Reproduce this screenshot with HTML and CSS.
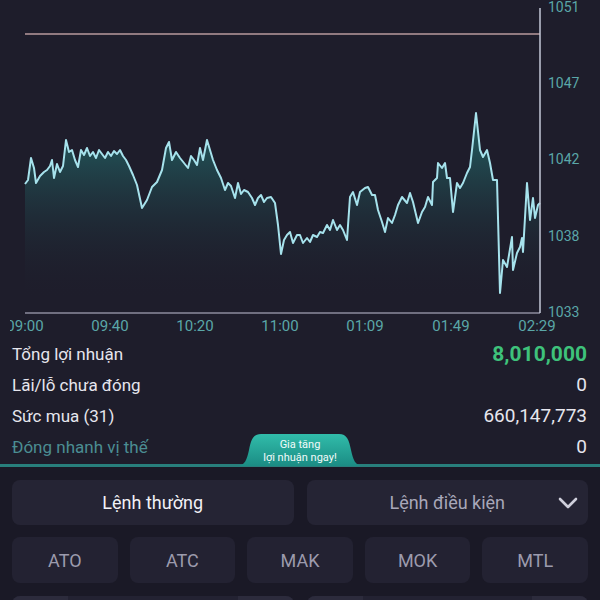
FILE: index.html
```html
<!DOCTYPE html>
<html lang="vi">
<head>
    <meta charset="UTF-8">
    <meta name="viewport" content="width=device-width, initial-scale=1.0">
    <title>Lợi nhuận</title>
    <link rel="stylesheet" href="styles.css">
</head>
<body>
    <div class="app">
        <section class="chart">
            <svg width="600" height="338" viewBox="0 0 600 338">
                <defs>
                    <linearGradient id="areaFill" x1="0" y1="140" x2="0" y2="300" gradientUnits="userSpaceOnUse">
                        <stop offset="0" stop-color="#22565a" stop-opacity="0.95"/>
                        <stop offset="1" stop-color="#1e1d2b" stop-opacity="0"/>
                    </linearGradient>
                    <clipPath id="labelClip">
                        <rect x="10" y="0" width="590" height="338"/>
                    </clipPath>
                </defs>

                <path id="area" class="area" d=""/>
                <polyline id="line" class="line" points=""/>

                <line class="ref-line" x1="25" y1="34" x2="540" y2="34"/>
                <line class="axis" x1="25" y1="313" x2="540" y2="313"/>
                <line class="axis-right" x1="540" y1="8" x2="540" y2="313"/>

                <g class="y-labels">
                    <text x="548" y="8">1051</text>
                    <text x="548" y="84">1047</text>
                    <text x="548" y="160">1042</text>
                    <text x="548" y="237">1038</text>
                    <text x="548" y="313">1033</text>
                </g>
                <g class="x-labels" clip-path="url(#labelClip)">
                    <text x="25" y="327">09:00</text>
                    <text x="110" y="327">09:40</text>
                    <text x="195" y="327">10:20</text>
                    <text x="280" y="327">11:00</text>
                    <text x="365" y="327">01:09</text>
                    <text x="451" y="327">01:49</text>
                    <text x="537" y="327">02:29</text>
                </g>
            </svg>
        </section>

        <section class="summary">
            <div class="row">
                <span>Tổng lợi nhuận</span>
                <span class="value profit">8,010,000</span>
            </div>
            <div class="row">
                <span>Lãi/lỗ chưa đóng</span>
                <span class="value">0</span>
            </div>
            <div class="row">
                <span>Sức mua (31)</span>
                <span class="value">660,147,773</span>
            </div>
            <div class="row">
                <span class="muted">Đóng nhanh vị thế</span>
                <span class="value">0</span>
            </div>
        </section>

        <div class="divider">
            <div class="promo">
                <svg class="promo-shape" width="126" height="33" viewBox="0 0 126 33">
                    <defs>
                        <linearGradient id="promoFill" x1="0" y1="0" x2="0" y2="1">
                            <stop offset="0" stop-color="#31bcaa"/>
                            <stop offset="1" stop-color="#1b8c84"/>
                        </linearGradient>
                    </defs>
                    <path d="M0 33 C8 33 10 26 12 17 C14 7 16 1 24 1 H102 C110 1 112 7 114 17 C116 26 118 33 126 33 Z" fill="url(#promoFill)"/>
                </svg>
                <span class="promo-text">Gia tăng<br>lợi nhuận ngay!</span>
            </div>
        </div>

        <section class="order-panel">
            <div class="tabs">
                <div class="tab active">Lệnh thường</div>
                <div class="tab">
                    Lệnh điều kiện
                    <svg class="chevron" width="20" height="12" viewBox="0 0 20 12">
                        <polyline points="2,2 10,10 18,2"/>
                    </svg>
                </div>
            </div>
            <div class="types">
                <div class="type">ATO</div>
                <div class="type">ATC</div>
                <div class="type">MAK</div>
                <div class="type">MOK</div>
                <div class="type">MTL</div>
            </div>
            <div class="inputs">
                <div class="stepper"><span class="step"></span><span class="step"></span></div>
                <div class="stepper"><span class="step"></span><span class="step"></span></div>
            </div>
        </section>
    </div>

    <script>
        // price history, traced from the session (x, y in chart pixels)
        const points = [
            [25,184],[28,180],[31,158],[34,168],[36,183],[40,176],[44,172],[47,170],[50,166],[52,160],
            [54,178],[57,164],[60,172],[63,166],[66,140],[69,152],[72,150],[75,160],[78,167],[81,150],
            [84,155],[87,148],[90,156],[93,152],[96,158],[99,150],[102,154],[105,158],[108,152],[111,156],
            [114,151],[117,154],[120,150],[123,156],[126,160],[129,166],[133,175],[137,185],[142,208],[147,200],
            [152,187],[157,182],[162,170],[166,148],[169,142],[172,160],[176,152],[180,158],[184,163],[188,168],
            [191,156],[194,160],[197,165],[200,148],[203,160],[207,140],[210,150],[213,160],[217,170],[221,178],
            [225,190],[228,183],[231,186],[235,198],[238,183],[241,194],[244,190],[248,192],[252,198],[255,205],
            [258,198],[261,195],[264,202],[267,198],[271,197],[275,203],[278,225],[281,254],[284,240],[287,235],
            [290,232],[293,243],[297,235],[300,235],[303,243],[307,238],[310,242],[313,235],[317,237],[320,232],
            [323,233],[327,225],[330,230],[333,220],[337,230],[340,225],[343,230],[347,240],[350,197],[353,192],
            [357,205],[360,192],[365,188],[368,187],[372,195],[375,195],[378,210],[382,222],[385,232],[388,218],
            [392,223],[395,215],[398,205],[402,197],[407,203],[410,193],[413,202],[418,223],[422,212],[425,207],
            [428,197],[432,205],[433,182],[437,178],[438,163],[442,168],[445,163],[447,178],[450,178],[453,212],
            [457,183],[460,188],[463,183],[467,173],[470,167],[472,150],[476,113],[480,150],[483,157],[487,150],
            [490,163],[493,180],[497,180],[500,293],[503,260],[507,267],[512,237],[513,270],[517,253],[520,247],
            [522,238],[523,252],[527,183],[530,220],[533,198],[535,218],[538,205],[540,203]
        ];

        const linePts = points.map(p => p.join(',')).join(' ');
        document.getElementById('line').setAttribute('points', linePts);

        const first = points[0];
        const last = points[points.length - 1];
        const areaPath = 'M' + points.map(p => p.join(' ')).join(' L') +
            ` L${last[0]} 313 L${first[0]} 313 Z`;
        document.getElementById('area').setAttribute('d', areaPath);
    </script>
</body>
</html>
```

FILE: styles.css
```css
body {
    margin: 0;
    padding: 0;
    background-color: #1e1d2b;
    font-family: Roboto, "Noto Sans", sans-serif;
    color: #e6e6ee;
    overflow: hidden;
}

.app {
    width: 600px;
}

.chart svg {
    display: block;
}

.area {
    fill: url(#areaFill);
}

.line {
    fill: none;
    stroke: #a6e2ec;
    stroke-width: 2;
    stroke-linejoin: round;
}

.ref-line {
    stroke: #b89a9e;
    stroke-width: 1.5;
}

.axis {
    stroke: #8d8b9e;
    stroke-width: 1.5;
}

.axis-right {
    stroke: #c4c8d8;
    stroke-width: 1.5;
}

.y-labels text {
    fill: #5aa7a8;
    font-size: 14px;
    dominant-baseline: middle;
}

.x-labels text {
    fill: #5aa7a8;
    font-size: 15px;
    text-anchor: middle;
    dominant-baseline: middle;
}

.summary {
    padding: 0 13px 0 12px;
}

.row {
    display: flex;
    justify-content: space-between;
    align-items: center;
    height: 31px;
    font-size: 17px;
}

.value {
    font-size: 19px;
}

.value.profit {
    color: #3ec27b;
    font-weight: bold;
    font-size: 21px;
}

.muted {
    color: #4b8d93;
}

.divider {
    position: relative;
    height: 3px;
    margin-top: 2px;
    background-color: #287f7c;
}

.promo {
    position: absolute;
    left: 50%;
    bottom: 1px;
    width: 126px;
    height: 33px;
    margin-left: -63px;
    display: flex;
    align-items: center;
    justify-content: center;
}

.promo-shape {
    position: absolute;
    left: 0;
    top: 0;
}

.promo-text {
    position: relative;
    color: #f2fbfa;
    font-size: 11px;
    line-height: 13px;
    text-align: center;
    padding-top: 3px;
}

.order-panel {
    background-color: #1a1926;
    padding: 13px 12px 0;
    display: flex;
    flex-direction: column;
    gap: 12px;
}

.tabs {
    display: grid;
    grid-template-columns: 1fr 1fr;
    gap: 13px;
}

.tab {
    position: relative;
    height: 45px;
    border-radius: 8px;
    background-color: #252434;
    display: flex;
    align-items: center;
    justify-content: center;
    font-size: 18px;
    color: #a8a7b9;
}

.tab.active {
    color: #f1f1f6;
}

.chevron {
    position: absolute;
    right: 10px;
    top: 17px;
}

.chevron polyline {
    fill: none;
    stroke: #cfcfdb;
    stroke-width: 2.6;
    stroke-linecap: round;
    stroke-linejoin: round;
}

.types {
    display: grid;
    grid-template-columns: repeat(5, 1fr);
    gap: 12px;
}

.type {
    height: 46px;
    border-radius: 8px;
    background-color: #232232;
    display: flex;
    align-items: center;
    justify-content: center;
    font-size: 18px;
    color: #9c9bad;
}

.inputs {
    display: grid;
    grid-template-columns: 1fr 1fr;
    gap: 13px;
    margin-top: 1px;
}

.stepper {
    height: 45px;
    border-radius: 8px;
    background-color: #232232;
    display: flex;
    justify-content: space-between;
    overflow: hidden;
}

.step {
    width: 56px;
    background-color: #2c2b3c;
}
```
